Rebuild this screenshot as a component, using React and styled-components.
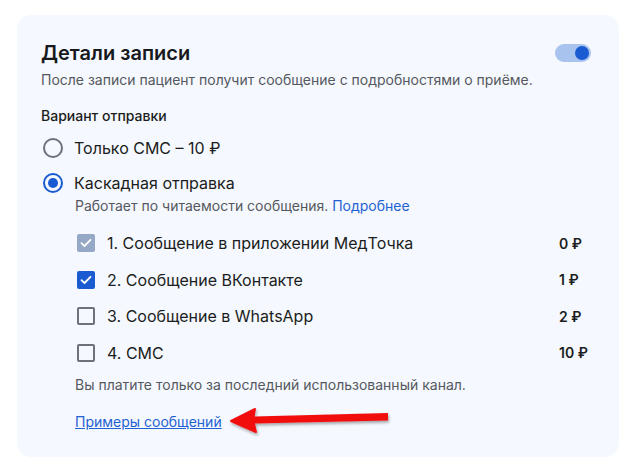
import React from "react";
import styled, { createGlobalStyle } from "styled-components";

const GlobalStyle = createGlobalStyle`
    body {
        margin: 0;
        background: #ffffff;
        font-family: Inter, "Noto Sans", sans-serif;
        color: #1b1d21;
    }
`;

const channels = [
    { label: "1. Сообщение в приложении МедТочка", price: "0 ₽", state: "locked" },
    { label: "2. Сообщение ВКонтакте", price: "1 ₽", state: "on" },
    { label: "3. Сообщение в WhatsApp", price: "2 ₽", state: "off" },
    { label: "4. СМС", price: "10 ₽", state: "off" },
];

export default function App() {
    return (
        <Page>
            <GlobalStyle />
            <Card>
                <Header>
                    <Title>Детали записи</Title>
                    <Toggle><Knob /></Toggle>
                </Header>
                <Subtitle>После записи пациент получит сообщение с подробностями о приёме.</Subtitle>

                <SectionLabel>Вариант отправки</SectionLabel>

                <RadioRow>
                    <Radio />
                    <RadioLabel>Только СМС – 10 ₽</RadioLabel>
                </RadioRow>
                <RadioRow>
                    <Radio checked />
                    <RadioLabel>Каскадная отправка</RadioLabel>
                </RadioRow>

                <Nested>
                    <Hint>Работает по читаемости сообщения. <Link>Подробнее</Link></Hint>

                    <Channels>
                        {channels.map(c => (
                            <ChannelRow key={c.label}>
                                <Checkbox state={c.state}>
                                    {c.state !== "off" &&
                                        <svg width="12" height="10" viewBox="0 0 12 10">
                                            <path d="M1.5 5.2 L4.5 8 L10.5 1.8" fill="none" stroke="#fff" strokeWidth="1.8" strokeLinecap="round" strokeLinejoin="round" />
                                        </svg>}
                                </Checkbox>
                                <ChannelLabel>{c.label}</ChannelLabel>
                                <Price>{c.price}</Price>
                            </ChannelRow>
                        ))}
                    </Channels>

                    <Footnote>Вы платите только за последний использованный канал.</Footnote>

                    <ExamplesRow>
                        <Examples>Примеры сообщений</Examples>
                        <Arrow width="160" height="40" viewBox="0 0 160 40">
                            <defs>
                                <filter id="sh" x="-10%" y="-40%" width="130%" height="200%">
                                    <feDropShadow dx="1" dy="2" stdDeviation="1.5" floodColor="#000" floodOpacity="0.35" />
                                </filter>
                            </defs>
                            <g filter="url(#sh)">
                                <path d="M26 15.5 L160 12 L160 19.5 L26 22.5 Z" fill="#f21010" />
                                <path d="M3 20 L27 8 Q24 19 28 31 Z" fill="#f21010" stroke="#f21010" strokeWidth="2" strokeLinejoin="round" />
                            </g>
                        </Arrow>
                    </ExamplesRow>
                </Nested>
            </Card>
        </Page>
    );
};

const Page = styled.div`
    width: 631px;
    height: 475px;
    padding: 15px 12px 0 17px;
    box-sizing: border-box;
    overflow: hidden;
`;

const Card = styled.div`
    width: 602px;
    height: 442px;
    box-sizing: border-box;
    background: #f5f8fe;
    border-radius: 14px;
    padding: 26px 24px 0 24px;
    display: flex;
    flex-direction: column;
`;

const Header = styled.div`
    display: flex;
    align-items: center;
    justify-content: space-between;
    padding-right: 4px;
`;

const Title = styled.h1`
    margin: 0;
    font-size: 20px;
    line-height: 24px;
    font-weight: 600;
    color: #17191c;
`;

const Toggle = styled.div`
    width: 36px;
    height: 18px;
    border-radius: 9px;
    background: #a9c3ef;
    display: flex;
    align-items: center;
    justify-content: flex-end;
    padding: 0 2px;
    box-sizing: border-box;
`;

const Knob = styled.div`
    width: 14px;
    height: 14px;
    border-radius: 50%;
    background: #1a5bd1;
`;

const Subtitle = styled.p`
    margin: 6px 0 0;
    font-size: 14px;
    line-height: 18px;
    color: #55595f;
`;

const SectionLabel = styled.div`
    margin-top: 18px;
    font-size: 14px;
    line-height: 18px;
    font-weight: 500;
    color: #1b1d21;
`;

const RadioRow = styled.div`
    display: flex;
    align-items: center;
    gap: 11px;
    height: 24px;
    margin-top: 11px;
    &:first-of-type { margin-top: 16px; }
`;

const Radio = styled.div`
    width: 20px;
    height: 20px;
    box-sizing: border-box;
    margin-left: 2px;
    border-radius: 50%;
    border: 2px solid ${props => props.checked ? "#1a5bd1" : "#6d7178"};
    display: flex;
    align-items: center;
    justify-content: center;
    &::after {
        content: "";
        display: ${props => props.checked ? "block" : "none"};
        width: 10px;
        height: 10px;
        border-radius: 50%;
        background: #1a5bd1;
    }
`;

const RadioLabel = styled.span`
    font-size: 16px;
    line-height: 20px;
    color: #1b1d21;
`;

const Nested = styled.div`
    padding-left: 34px;
    display: flex;
    flex-direction: column;
`;

const Hint = styled.div`
    margin-top: 2px;
    font-size: 14px;
    line-height: 18px;
    color: #55595f;
`;

const Link = styled.a`
    color: #1f62d4;
    cursor: pointer;
`;

const Channels = styled.div`
    margin-top: 16px;
    display: flex;
    flex-direction: column;
    gap: 12.5px;
`;

const ChannelRow = styled.div`
    display: flex;
    align-items: center;
    height: 24px;
    padding-left: 2px;
`;

const Checkbox = styled.div`
    width: 18px;
    height: 18px;
    box-sizing: border-box;
    border-radius: 2px;
    display: flex;
    align-items: center;
    justify-content: center;
    background: ${props => props.state === "on" ? "#1a5bd1" : props.state === "locked" ? "#95a8c6" : "transparent"};
    border: ${props => props.state === "off" ? "2px solid #6d7178" : "none"};
`;

const ChannelLabel = styled.span`
    margin-left: 12px;
    flex: 1;
    font-size: 16px;
    line-height: 20px;
    color: #1b1d21;
`;

const Price = styled.span`
    width: 36px;
    font-size: 14px;
    font-weight: 600;
    color: #1b1d21;
`;

const Footnote = styled.div`
    margin-top: 11px;
    font-size: 14px;
    line-height: 18px;
    color: #55595f;
`;

const ExamplesRow = styled.div`
    position: relative;
    margin-top: 17px;
`;

const Examples = styled.a`
    font-size: 14px;
    line-height: 18px;
    color: #1f62d4;
    text-decoration: underline;
    cursor: pointer;
`;

const Arrow = styled.svg`
    position: absolute;
    left: 153px;
    top: -10px;
    overflow: visible;
`;
